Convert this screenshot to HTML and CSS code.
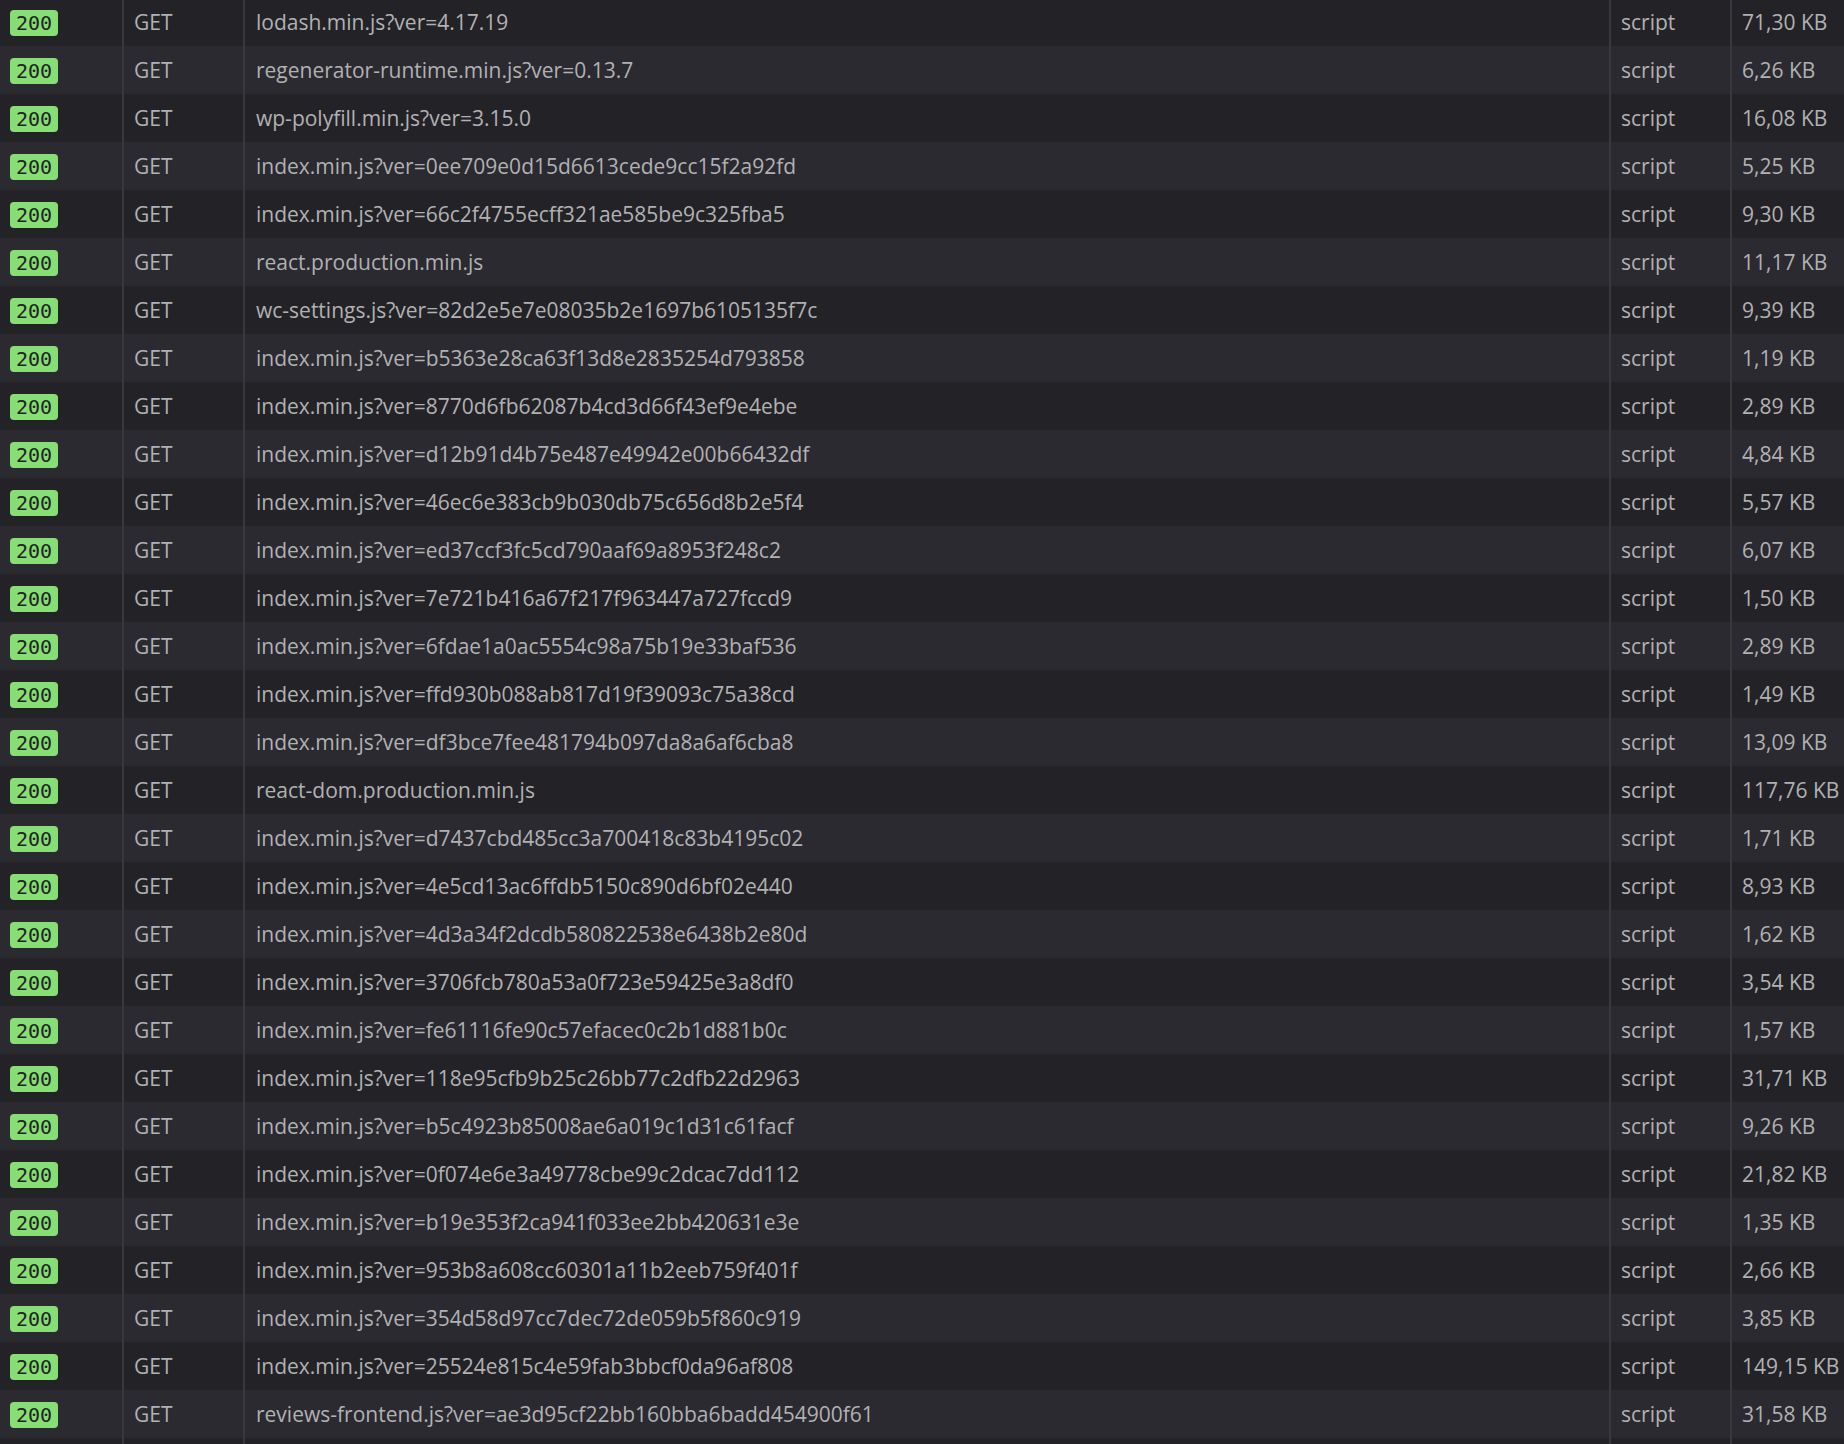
FILE: index.html
```html
<!DOCTYPE html>
<html>
<head>
<meta charset="utf-8">
<link rel="stylesheet" href="styles.css">
</head>
<body>
<div class="table">
<div class="row"><div class="c status"><span class="badge">200</span></div><div class="c method">GET</div><div class="c file">lodash.min.js?ver=4.17.19</div><div class="c type">script</div><div class="c size">71,30 KB</div></div>
<div class="row"><div class="c status"><span class="badge">200</span></div><div class="c method">GET</div><div class="c file">regenerator-runtime.min.js?ver=0.13.7</div><div class="c type">script</div><div class="c size">6,26 KB</div></div>
<div class="row"><div class="c status"><span class="badge">200</span></div><div class="c method">GET</div><div class="c file">wp-polyfill.min.js?ver=3.15.0</div><div class="c type">script</div><div class="c size">16,08 KB</div></div>
<div class="row"><div class="c status"><span class="badge">200</span></div><div class="c method">GET</div><div class="c file">index.min.js?ver=0ee709e0d15d6613cede9cc15f2a92fd</div><div class="c type">script</div><div class="c size">5,25 KB</div></div>
<div class="row"><div class="c status"><span class="badge">200</span></div><div class="c method">GET</div><div class="c file">index.min.js?ver=66c2f4755ecff321ae585be9c325fba5</div><div class="c type">script</div><div class="c size">9,30 KB</div></div>
<div class="row"><div class="c status"><span class="badge">200</span></div><div class="c method">GET</div><div class="c file">react.production.min.js</div><div class="c type">script</div><div class="c size">11,17 KB</div></div>
<div class="row"><div class="c status"><span class="badge">200</span></div><div class="c method">GET</div><div class="c file">wc-settings.js?ver=82d2e5e7e08035b2e1697b6105135f7c</div><div class="c type">script</div><div class="c size">9,39 KB</div></div>
<div class="row"><div class="c status"><span class="badge">200</span></div><div class="c method">GET</div><div class="c file">index.min.js?ver=b5363e28ca63f13d8e2835254d793858</div><div class="c type">script</div><div class="c size">1,19 KB</div></div>
<div class="row"><div class="c status"><span class="badge">200</span></div><div class="c method">GET</div><div class="c file">index.min.js?ver=8770d6fb62087b4cd3d66f43ef9e4ebe</div><div class="c type">script</div><div class="c size">2,89 KB</div></div>
<div class="row"><div class="c status"><span class="badge">200</span></div><div class="c method">GET</div><div class="c file">index.min.js?ver=d12b91d4b75e487e49942e00b66432df</div><div class="c type">script</div><div class="c size">4,84 KB</div></div>
<div class="row"><div class="c status"><span class="badge">200</span></div><div class="c method">GET</div><div class="c file">index.min.js?ver=46ec6e383cb9b030db75c656d8b2e5f4</div><div class="c type">script</div><div class="c size">5,57 KB</div></div>
<div class="row"><div class="c status"><span class="badge">200</span></div><div class="c method">GET</div><div class="c file">index.min.js?ver=ed37ccf3fc5cd790aaf69a8953f248c2</div><div class="c type">script</div><div class="c size">6,07 KB</div></div>
<div class="row"><div class="c status"><span class="badge">200</span></div><div class="c method">GET</div><div class="c file">index.min.js?ver=7e721b416a67f217f963447a727fccd9</div><div class="c type">script</div><div class="c size">1,50 KB</div></div>
<div class="row"><div class="c status"><span class="badge">200</span></div><div class="c method">GET</div><div class="c file">index.min.js?ver=6fdae1a0ac5554c98a75b19e33baf536</div><div class="c type">script</div><div class="c size">2,89 KB</div></div>
<div class="row"><div class="c status"><span class="badge">200</span></div><div class="c method">GET</div><div class="c file">index.min.js?ver=ffd930b088ab817d19f39093c75a38cd</div><div class="c type">script</div><div class="c size">1,49 KB</div></div>
<div class="row"><div class="c status"><span class="badge">200</span></div><div class="c method">GET</div><div class="c file">index.min.js?ver=df3bce7fee481794b097da8a6af6cba8</div><div class="c type">script</div><div class="c size">13,09 KB</div></div>
<div class="row"><div class="c status"><span class="badge">200</span></div><div class="c method">GET</div><div class="c file">react-dom.production.min.js</div><div class="c type">script</div><div class="c size">117,76 KB</div></div>
<div class="row"><div class="c status"><span class="badge">200</span></div><div class="c method">GET</div><div class="c file">index.min.js?ver=d7437cbd485cc3a700418c83b4195c02</div><div class="c type">script</div><div class="c size">1,71 KB</div></div>
<div class="row"><div class="c status"><span class="badge">200</span></div><div class="c method">GET</div><div class="c file">index.min.js?ver=4e5cd13ac6ffdb5150c890d6bf02e440</div><div class="c type">script</div><div class="c size">8,93 KB</div></div>
<div class="row"><div class="c status"><span class="badge">200</span></div><div class="c method">GET</div><div class="c file">index.min.js?ver=4d3a34f2dcdb580822538e6438b2e80d</div><div class="c type">script</div><div class="c size">1,62 KB</div></div>
<div class="row"><div class="c status"><span class="badge">200</span></div><div class="c method">GET</div><div class="c file">index.min.js?ver=3706fcb780a53a0f723e59425e3a8df0</div><div class="c type">script</div><div class="c size">3,54 KB</div></div>
<div class="row"><div class="c status"><span class="badge">200</span></div><div class="c method">GET</div><div class="c file">index.min.js?ver=fe61116fe90c57efacec0c2b1d881b0c</div><div class="c type">script</div><div class="c size">1,57 KB</div></div>
<div class="row"><div class="c status"><span class="badge">200</span></div><div class="c method">GET</div><div class="c file">index.min.js?ver=118e95cfb9b25c26bb77c2dfb22d2963</div><div class="c type">script</div><div class="c size">31,71 KB</div></div>
<div class="row"><div class="c status"><span class="badge">200</span></div><div class="c method">GET</div><div class="c file">index.min.js?ver=b5c4923b85008ae6a019c1d31c61facf</div><div class="c type">script</div><div class="c size">9,26 KB</div></div>
<div class="row"><div class="c status"><span class="badge">200</span></div><div class="c method">GET</div><div class="c file">index.min.js?ver=0f074e6e3a49778cbe99c2dcac7dd112</div><div class="c type">script</div><div class="c size">21,82 KB</div></div>
<div class="row"><div class="c status"><span class="badge">200</span></div><div class="c method">GET</div><div class="c file">index.min.js?ver=b19e353f2ca941f033ee2bb420631e3e</div><div class="c type">script</div><div class="c size">1,35 KB</div></div>
<div class="row"><div class="c status"><span class="badge">200</span></div><div class="c method">GET</div><div class="c file">index.min.js?ver=953b8a608cc60301a11b2eeb759f401f</div><div class="c type">script</div><div class="c size">2,66 KB</div></div>
<div class="row"><div class="c status"><span class="badge">200</span></div><div class="c method">GET</div><div class="c file">index.min.js?ver=354d58d97cc7dec72de059b5f860c919</div><div class="c type">script</div><div class="c size">3,85 KB</div></div>
<div class="row"><div class="c status"><span class="badge">200</span></div><div class="c method">GET</div><div class="c file">index.min.js?ver=25524e815c4e59fab3bbcf0da96af808</div><div class="c type">script</div><div class="c size">149,15 KB</div></div>
<div class="row"><div class="c status"><span class="badge">200</span></div><div class="c method">GET</div><div class="c file">reviews-frontend.js?ver=ae3d95cf22bb160bba6badd454900f61</div><div class="c type">script</div><div class="c size">31,58 KB</div></div>
<div class="row"><div class="c status"></div><div class="c method"></div><div class="c file"></div><div class="c type"></div><div class="c size"></div></div>
</div>
</body>
</html>
```

FILE: styles.css
```css
html, body {
  margin: 0;
  padding: 0;
  background: #232327;
  overflow: hidden;
}
.table {
  margin-top: -2px;
  font-family: "Open Sans", "Noto Sans", sans-serif;
  font-size: 21px;
  color: #b1b1b3;
}
.row {
  display: grid;
  grid-template-columns: 122px 121px 1366px 121px 1fr;
  height: 48px;
  background: #232327;
}
.row:nth-child(even) {
  background: #2b2a30;
}
.c {
  display: flex;
  align-items: center;
  padding: 0 0 0 10px;
  white-space: nowrap;
  overflow: hidden;
  border-left: 2px solid #38383d;
}
.c.status {
  border-left: none;
}
.c.file {
  padding-left: 11px;
}
.badge {
  display: inline-flex;
  align-items: center;
  justify-content: center;
  width: 48px;
  height: 26px;
  margin-top: 2px;
  border-radius: 4px;
  background: #86de74;
  color: #232327;
  font-family: "DejaVu Sans Mono", monospace;
  font-size: 20px;
}
```
